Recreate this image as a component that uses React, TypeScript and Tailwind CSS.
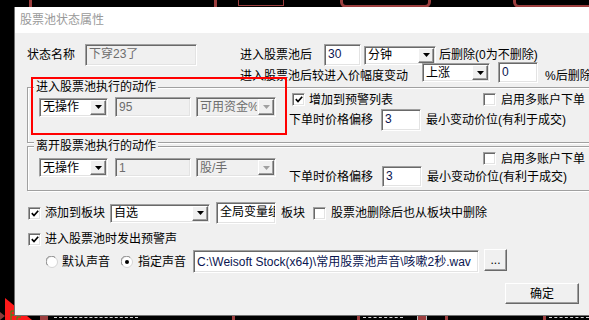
import React from 'react';

const sunken =
  'border border-t-[#a0a0a0] border-l-[#a0a0a0] border-b-white border-r-white shadow-[inset_1px_1px_0_#696969,inset_-1px_-1px_0_#e3e3e3]';
const raised =
  'border border-t-white border-l-white border-b-[#696969] border-r-[#696969] shadow-[inset_-1px_-1px_0_#a0a0a0]';

type FieldProps = { size: string; text?: string; disabled?: boolean; className?: string };

function Field({ size, text, disabled, className = '' }: FieldProps) {
  return (
    <div
      className={`${size} ${sunken} ${className} shrink-0 overflow-hidden whitespace-nowrap pl-[3px] pt-[2px] leading-[14px] ${
        disabled ? 'bg-[#f0f0f0] text-[#6d6d6d]' : 'bg-white text-[#0a1550]'
      }`}
    >
      {text}
    </div>
  );
}

function Select({ size, text, disabled, className = '' }: FieldProps) {
  return (
    <div className={`${size} ${sunken} ${className} flex shrink-0 ${disabled ? 'bg-[#f0f0f0] text-[#6d6d6d]' : 'bg-white text-black'}`}>
      <span className="flex flex-1 items-center overflow-hidden whitespace-nowrap pl-[3px] leading-[14px]">{text}</span>
      <span className={`m-[1px] flex w-[16px] items-center justify-center bg-[#f0f0f0] ${raised}`}>
        <svg width="7" height="4" viewBox="0 0 7 4">
          <path d="M0 0h7L3.5 4z" fill={disabled ? '#a0a0a0' : '#000'} />
        </svg>
      </span>
    </div>
  );
}

function Check({ checked, className = '' }: { checked?: boolean; className?: string }) {
  return (
    <span className={`flex h-[13px] w-[13px] shrink-0 items-center justify-center bg-white ${sunken} ${className}`}>
      {checked && (
        <svg width="8" height="7" viewBox="0 0 8 7">
          <path d="M0.8 3.2l2.2 2.3L7.2 0.8" stroke="#000" strokeWidth="1.7" fill="none" />
        </svg>
      )}
    </span>
  );
}

function Radio({ checked, className = '' }: { checked?: boolean; className?: string }) {
  return (
    <svg width="12" height="12" viewBox="0 0 12 12" className={`shrink-0 ${className}`}>
      <circle cx="6" cy="6" r="5.5" fill="#fff" stroke="#d4d4d4" />
      <path d="M1.6 9.2A5 5 0 0 1 9.2 1.6" stroke="#808080" fill="none" />
      {checked && <circle cx="6" cy="6" r="2" fill="#000" />}
    </svg>
  );
}

function Button({ size, label, className = '' }: { size: string; label: string; className?: string }) {
  return (
    <div className={`${size} ${className} flex shrink-0 items-center justify-center bg-[#f0f0f0] leading-[14px] ${raised}`}>
      {label}
    </div>
  );
}

function Group({ title, size, children }: { title: string; size: string; children: React.ReactNode }) {
  return (
    <div className={`relative ml-[12px] mr-[20px] ${size} border border-[#a0a0a0] shadow-[1px_1px_0_#fff,inset_1px_1px_0_#fff]`}>
      <span className="absolute -top-[7px] left-[6px] bg-[#f0f0f0] px-[2px] leading-[13px]">{title}</span>
      {children}
    </div>
  );
}

export default function App() {
  return (
    <div className="relative h-[320px] w-[589px] overflow-hidden bg-black font-['Liberation_Sans','Noto_Sans_CJK_SC',sans-serif] text-[12px] text-black">
      {/* chart bits behind the dialog */}
      <div className="absolute left-[29px] top-0 h-[8px] w-[3px] bg-[#9c3e3e]" />
      <div className="absolute left-[214px] top-0 h-[8px] w-[3px] bg-[#9c3e3e]" />
      <div className="absolute left-[238px] -top-[10px] h-[16px] w-[46px] border border-[#9c3e3e]" />
      <div className="absolute left-[340px] -top-[20px] h-[28px] w-[91px] rounded-b-[6px] border-[3px] border-[#9c3e3e]" />
      <div className="absolute left-[513px] -top-[20px] h-[28px] w-[100px] rounded-bl-[6px] border-[3px] border-[#9c3e3e]" />
      <svg className="absolute left-0 top-[296px]" width="40" height="24" viewBox="0 0 40 24">
        <polygon points="5,2 32,24 5,24" fill="#ff1a1a" />
        <polygon points="0,16 5,20 0,24" fill="#8a3a3a" />
        <path d="M11 24v-9h4M11 19h3M17 21h4M17 21v3" stroke="#1aa01a" fill="none" />
      </svg>
      <div className="absolute left-[40px] top-[312px] h-[8px] w-[8px] bg-[#9c3e3e]" />
      <div className="absolute left-[232px] top-[312px] h-[8px] w-[3px] bg-[#9c3e3e]" />
      <div className="absolute left-[357px] top-[312px] h-[8px] w-[3px] bg-[#9c3e3e]" />
      <div className="absolute left-[417px] top-[313px] h-[8px] w-[10px] border border-[#c0c0c0] bg-[#9c3e3e]" />
      <div className="absolute left-[445px] top-[312px] h-[8px] w-[3px] bg-[#9c3e3e]" />
      <div className="absolute left-[543px] top-[312px] h-[8px] w-[3px] bg-[#9c3e3e]" />
      <div className="absolute left-[54px] top-[317px] h-[2px] w-[84px] border-t border-dashed border-[#d8d8d8]" />
      <div className="absolute left-[363px] top-[317px] h-[2px] w-[40px] border-t border-dashed border-[#d8d8d8]" />
      <div className="absolute left-[549px] top-[317px] h-[2px] w-[40px] border-t border-dashed border-[#d8d8d8]" />

      {/* dialog window */}
      <div className="absolute left-[14px] top-[7px] z-10 w-[630px] border-b border-l border-[#707070]">
        <div className="flex h-[26px] items-center bg-white pl-[5px] leading-[14px] text-[#9a9a9a]">股票池状态属性</div>

        <div className="relative h-[282px] bg-[#f0f0f0]">
          {/* top settings */}
          <div className="flex pt-[10px]">
            <div className="mt-[1px] flex h-[22px] items-center pl-[12px]">
              <span className="w-[58px] leading-[14px]">状态名称</span>
              <Field size="w-[112px] h-[22px]" text="下穿23了" disabled />
            </div>
            <div className="ml-[43px] flex flex-col">
              <div className="mt-[1px] flex h-[22px] items-center">
                <span className="w-[84px] leading-[14px]">进入股票池后</span>
                <Field size="w-[37px] h-[22px]" text="30" />
                <Select size="w-[72px] h-[19px]" text="分钟" className="ml-[3px]" />
                <span className="ml-[3px] whitespace-nowrap leading-[14px]">后删除(0为不删除)</span>
              </div>
              <div className="-mt-[4px] flex h-[21px] items-center">
                <span className="relative top-[3px] w-[182px] whitespace-nowrap leading-[14px]">进入股票池后较进入价幅度变动</span>
                <Select size="w-[68px] h-[19px]" text="上涨" />
                <Field size="w-[40px] h-[21px]" text="0" className="ml-[8px]" />
                <span className="relative top-[3px] ml-[7px] whitespace-nowrap leading-[14px]">%后删除</span>
              </div>
            </div>
          </div>

          {/* action groups */}
          <div className="mt-[4px]">
            <Group title="进入股票池执行的动作" size="h-[56px]">
              <div className="flex">
                <div className="flex items-center self-start pl-[11px] pt-[9px]">
                  <Select size="w-[69px] h-[19px]" text="无操作" />
                  <Field size="w-[76px] h-[20px]" text="95" disabled className="ml-[7px]" />
                  <Select size="w-[80px] h-[20px]" text="可用资金%" disabled className="ml-[5px]" />
                </div>
                <div className="ml-[13px] flex flex-col pt-[5px]">
                  <div className="flex h-[13px] items-center">
                    <div className="flex w-[194px] items-center pl-[3px]">
                      <Check checked />
                      <span className="ml-[4px] whitespace-nowrap leading-[14px]">增加到预警列表</span>
                    </div>
                    <Check />
                    <span className="ml-[5px] whitespace-nowrap leading-[14px]">启用多账户下单</span>
                  </div>
                  <div className="mt-[3px] flex items-center">
                    <span className="w-[92px] whitespace-nowrap leading-[14px]">下单时价格偏移</span>
                    <Field size="w-[40px] h-[22px]" text="3" />
                    <span className="ml-[5px] whitespace-nowrap leading-[14px]">最小变动价位(有利于成交)</span>
                  </div>
                </div>
              </div>
            </Group>
          </div>
          <div className="mt-[3px]">
            <Group title="离开股票池执行的动作" size="h-[45px]">
              <div className="flex">
                <div className="flex items-center self-start pl-[11px] pt-[11px]">
                  <Select size="w-[69px] h-[19px]" text="无操作" />
                  <Field size="w-[76px] h-[19px]" text="1" disabled className="ml-[7px]" />
                  <Select size="w-[80px] h-[19px]" text="股/手" disabled className="ml-[5px]" />
                </div>
                <div className="ml-[13px] flex flex-col pt-[5px]">
                  <div className="flex h-[13px] items-center">
                    <div className="w-[194px]" />
                    <Check />
                    <span className="ml-[5px] whitespace-nowrap leading-[14px]">启用多账户下单</span>
                  </div>
                  <div className="mt-[1px] flex items-center">
                    <span className="w-[93px] whitespace-nowrap leading-[14px]">下单时价格偏移</span>
                    <Field size="w-[40px] h-[21px]" text="3" />
                    <span className="ml-[5px] whitespace-nowrap leading-[14px]">最小变动价位(有利于成交)</span>
                  </div>
                </div>
              </div>
            </Group>
          </div>

          {/* block + sound */}
          <div className="mt-[11px] flex h-[22px] items-center pl-[13px]">
            <Check checked />
            <span className="ml-[4px] w-[60px] whitespace-nowrap leading-[14px]">添加到板块</span>
            <Select size="w-[100px] h-[19px]" text="自选" className="ml-[5px]" />
            <Field size="w-[60px] h-[22px]" text="全局变量组" className="ml-[6px] !text-black" />
            <span className="ml-[5px] leading-[14px]">板块</span>
            <Check className="ml-[8px]" />
            <span className="ml-[5px] whitespace-nowrap leading-[14px]">股票池删除后也从板块中删除</span>
          </div>
          <div className="mt-[7px] flex h-[16px] items-center pl-[13px]">
            <Check checked />
            <span className="ml-[4px] whitespace-nowrap leading-[14px]">进入股票池时发出预警声</span>
          </div>
          <div className="mt-[3px] flex h-[23px] items-center pl-[31px]">
            <Radio />
            <span className="ml-[4px] w-[48px] leading-[14px]">默认声音</span>
            <Radio checked className="ml-[11px]" />
            <span className="ml-[5px] w-[48px] leading-[14px]">指定声音</span>
            <Field
              size="w-[286px] h-[23px]"
              text={'C:\\Weisoft Stock(x64)\\常用股票池声音\\咳嗽2秒.wav'}
              className="ml-[7px] pt-[4px]"
            />
            <Button size="w-[23px] h-[22px]" label="..." className="ml-[5px] self-start -mt-[1px]" />
          </div>
          <div className="mt-[10px] flex pl-[490px]">
            <Button size="w-[74px] h-[21px]" label="确定" />
          </div>
        </div>
      </div>

      {/* annotation box */}
      <div className="absolute left-[31px] top-[77px] z-20 h-[58px] w-[256px] border-2 border-[#ff0000]" />
    </div>
  );
}
